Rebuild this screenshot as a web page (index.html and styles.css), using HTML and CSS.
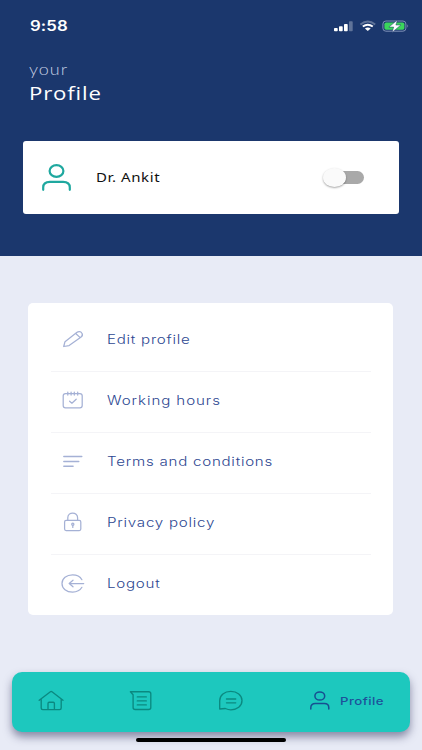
FILE: index.html
```html
<!DOCTYPE html>
<html lang="en">
<head>
<meta charset="utf-8">
<meta name="viewport" content="width=device-width, initial-scale=1">
<title>Profile</title>
<link rel="stylesheet" href="styles.css">
</head>
<body>
<div class="screen">
  <header class="header">
    <div class="status">
      <span class="time">9:58</span>
      <svg class="signals" width="76" height="14" viewBox="0 0 76 14">
        <g fill="#fff"><rect x="0" y="8" width="3.7" height="3.2" rx=".8"/><rect x="5" y="6.3" width="3.7" height="4.9" rx=".8"/><rect x="10" y="4" width="3.7" height="7.2" rx=".8"/><rect x="15" y="1.2" width="3.7" height="10" rx=".8" opacity=".3"/></g>
        <g fill="none" stroke="#fff" stroke-width="1.9"><path d="M26.4 4.4Q33.8-1.3 41.2 4.4" opacity=".3"/><path d="M28.8 6.6Q33.8 2.9 38.8 6.6"/></g>
        <path d="M30.9 8.6Q33.8 6.4 36.7 8.6L33.8 11z" fill="#fff"/>
        <rect x="48.9" y="1" width="23" height="10.2" rx="3" fill="none" stroke="#7f90b7"/>
        <rect x="50.4" y="2.5" width="20" height="7.2" rx="1.8" fill="#3bd45c"/>
        <path d="M73.3 4.3q1.8 1.7 0 3.4z" fill="#7f90b7"/>
        <path d="M63.4 0 54.9 7.1h4.8L58 12.4l8.9-7.4h-5z" fill="#fff" stroke="#1b376d" stroke-width=".5"/>
      </svg>
    </div>
    <h1 class="heading"><span class="eyebrow">your</span><span class="title">Profile</span></h1>
    <section class="user-card">
      <svg class="user-icon" width="32" height="30" viewBox="0 0 32 30" fill="none" stroke="#1fa89f" stroke-width="2.2" stroke-linecap="round"><ellipse cx="15.5" cy="8" rx="6.9" ry="5.8"/><path d="M2.2 26.8v-2.3c0-3.6 2.7-5.7 6.7-5.7h13.2c4 0 6.7 2.1 6.7 5.7v2.3"/></svg>
      <span class="user-name">Dr. Ankit</span>
      <span class="switch"><span class="knob"></span></span>
    </section>
  </header>
  <main class="menu">
    <div class="row">
      <svg class="icon" viewBox="0 0 24 22"><path d="M2.7 18.5 4 13.7 15.7 4.6C17.4 3.3 19.8 3.4 20.8 5c1 1.4.5 3.1-1 4.2L8.1 17.6zM14.7 5.5l4.5 4.1"/></svg>
      <span class="label">Edit profile</span>
    </div>
    <div class="row">
      <svg class="icon" viewBox="0 0 24 22"><rect x="2.2" y="4.5" width="19" height="14.4" rx="2.3"/><path d="M6.8 3v3M10.1 3v3M13.3 3v3M16.7 3v3M8.6 12.2l2.3 2 4.3-4"/></svg>
      <span class="label hours">Working hours</span>
    </div>
    <div class="row">
      <svg class="icon lines" viewBox="0 0 24 22"><path d="M2.8 6.5h18M2.8 11.5h15M2.8 16.2h9.3"/></svg>
      <span class="label">Terms and conditions</span>
    </div>
    <div class="row">
      <svg class="icon" viewBox="0 0 24 22"><rect x="3.6" y="9.4" width="16.2" height="10.2" rx="1.5"/><path d="M6.8 9.2V6.8c0-6.2 9.8-6.2 9.8 0v2.4M11.8 14.3v2.1"/><circle cx="11.8" cy="13.2" r="1.1"/></svg>
      <span class="label">Privacy policy</span>
    </div>
    <div class="row">
      <svg class="icon" viewBox="0 0 24 22"><path d="M20.9 7.7C19.1 4.6 15.8 2.9 11.6 2.9 5.4 2.9 1 6.5 1 11.5s4.4 8.6 10.6 8.6c4.2 0 7.5-1.7 9.3-4.8M22.7 11.5H8.3M12 8.2 8.2 11.5l3.8 3.3"/></svg>
      <span class="label">Logout</span>
    </div>
  </main>
  <footer class="footer">
    <nav class="nav">
      <svg class="nav-icon" viewBox="0 0 26 22"><path d="M1.2 10.3 12.4 1.8q.8-.6 1.6 0l11 8.5M3.2 9.1v9c0 1 .5 1.5 1.5 1.5h17c1 0 1.5-.5 1.5-1.5v-9M10 19.4v-6c0-.8.4-1.2 1.2-1.2h4c.8 0 1.2.4 1.2 1.2v6"/></svg>
      <svg class="nav-icon" viewBox="0 0 26 22"><path d="M2.4 1.7h18.2c1.4 0 2.2.7 2.2 2v13.8c0 1.3-.8 2-2.2 2H7.3c-1.4 0-2.2-.7-2.2-2V4.8zM9.3 6.9h9M9.3 10.9h9M9.3 14.9h9"/></svg>
      <svg class="nav-icon" viewBox="0 0 26 22"><path d="M1.7 19V10.7C1.7 5.2 6.5 1.4 12.8 1.4S24 5.2 24 10.6s-4.9 9.2-11.2 9.2c-2.2 0-3.9-.6-5.5-1.3zM8.5 9h9.2M8.5 12.8h9.2"/></svg>
      <span class="nav-active">
        <svg width="22" height="22" viewBox="0 0 22 22" fill="none" stroke="#174f91" stroke-width="1.5" stroke-linecap="round"><ellipse cx="10.8" cy="6" rx="4.9" ry="4.1"/><path d="M1.8 19.1v-1.4c0-2.7 1.7-4.2 4.5-4.2h9c2.8 0 4.5 1.5 4.5 4.2v1.4"/></svg>
        <span class="nav-label">Profile</span>
      </span>
    </nav>
    <div class="home-bar"></div>
  </footer>
</div>
</body>
</html>
```
FILE: styles.css
```css
* { box-sizing: border-box; }
body { margin: 0; font-family: Lato, "Liberation Sans", sans-serif; background: #e8ebf6; }
.screen { width: 422px; height: 750px; display: flex; flex-direction: column; overflow: hidden; }
svg { display: block; flex: none; }
.time, .eyebrow, .title, .user-name, .label, .nav-label { white-space: nowrap; transform-origin: left center; transform: scaleX(1.2); }

.header { height: 256px; flex: none; background: #1b376d; padding: 16px 23px 0; }
.status { display: flex; justify-content: space-between; height: 20px; padding: 0 0 0 7px; }
.signals { margin-top: 4px; margin-right: -11px; }
.time { color: #fff; font: 600 14px/20px Inter, sans-serif; letter-spacing: .1px; }
.heading { margin: 23px 0 0; padding-left: 6px; height: 82px; font-weight: 400; display: flex; flex-direction: column; align-items: flex-start; }
.eyebrow { color: #c5cee2; font: 300 15px/20px Lato, sans-serif; letter-spacing: .8px; }
.title { color: #fff; font: 400 18.5px/28px "Open Sans", sans-serif; letter-spacing: .7px; }
.user-card { height: 73px; background: #fff; border-radius: 3px; display: flex; align-items: center; padding: 0 35px 0 18px; }
.user-name { color: #111; font: 400 12.5px/20px "Noto Sans", sans-serif; letter-spacing: .5px; margin-left: 23px; }
.switch { width: 36px; height: 13px; margin-left: auto; border-radius: 7px; background: #a9a9a9; position: relative; }
.knob { position: absolute; left: -5px; top: -3px; width: 23px; height: 19px; border-radius: 50%; background: #fafafa; box-shadow: 0 1px 2px rgba(0,0,0,.35); }

.menu { margin: 46.5px 29px 0 28px; height: 312.5px; flex: none; padding: 8px 22px 0 23px; background: #fff; border-radius: 5px; }
.row { height: 61px; display: flex; align-items: center; padding-left: 10px; border-bottom: 1px solid #f4f4f7; }
.row:last-child { border-bottom-color: transparent; }
.icon { width: 24px; height: 22px; margin-top: -3px; fill: none; stroke: #a5b1d5; stroke-width: 1.25; stroke-linecap: round; stroke-linejoin: round; }
.lines { stroke-width: 1.4; }
.label { color: #2d4791; font: 300 12.6px/20px Inter, sans-serif; letter-spacing: .62px; margin-left: 22.4px; margin-top: -1px; }
.hours { letter-spacing: .75px; }

.footer { margin-top: 56.5px; padding: 0 12px; }
.nav { height: 60px; border-radius: 10px; background: #1dc8be; box-shadow: 0 5px 8px rgba(40,42,85,.5); display: grid; grid-template-columns: 90px 90px 92px 1fr; align-items: center; padding: 0 0 1px 26px; }
.nav-icon { width: 26px; height: 22px; fill: none; stroke: #0b8980; stroke-width: 1.35; stroke-linecap: round; stroke-linejoin: round; }
.nav-active { display: flex; align-items: center; margin-left: -1px; }
.nav-label { color: #1d519a; font: 500 11px/20px Inter, sans-serif; letter-spacing: .4px; margin-left: 9px; }
.home-bar { width: 150px; height: 4px; margin: 6.5px auto 0; border-radius: 2px; background: #000; position: relative; }
```
